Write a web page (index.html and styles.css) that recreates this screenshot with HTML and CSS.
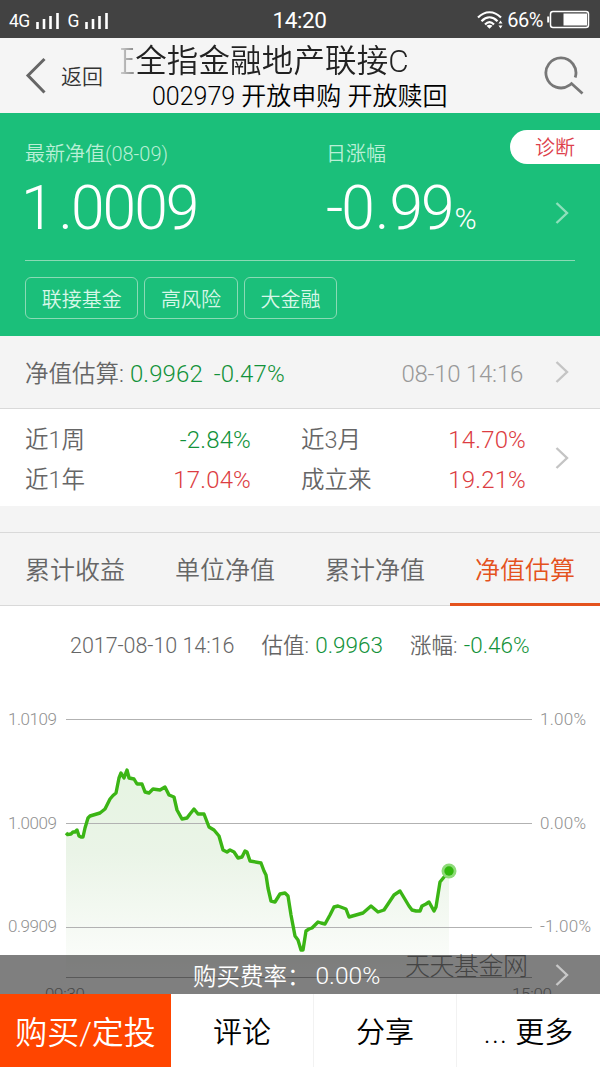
FILE: index.html
```html
<!DOCTYPE html>
<html lang="zh-CN">
<head>
<meta charset="utf-8">
<title>基金详情</title>
<link rel="stylesheet" href="styles.css">
</head>
<body>
<div class="app">
  <div class="status">
    <div class="signals">
      <span>4G</span>
      <svg width="24" height="18" viewBox="0 0 24 18"><path d="M1.500 10v7M8 7v10M14.500 4v13M21.500 1v16" stroke="#fff" stroke-width="2.600"/></svg>
      <span class="g">G</span>
      <svg width="24" height="18" viewBox="0 0 24 18"><path d="M1.500 10v7M8 7v10M14.500 4v13M21.500 1v16" stroke="#fff" stroke-width="2.600"/></svg>
    </div>
    <div class="clock">14:20</div>
    <div class="power">
      <svg width="26" height="18" viewBox="0 0 26 18" fill="none" stroke="#fff" stroke-width="2.200"><path d="M1 6.500C8-.5 17-.5 24 6.500M4.500 10.200c5-5 11-5 16 0M8 13.500c3-3 6-3 9 0"/><path d="M9.500 14.800q3-2 6 0l-3 3z" fill="#fff" stroke="none"/><path d="M23.500 9.500l2 3h-4zM23.500 17.500l2-3h-4z" fill="#fff" stroke="none"/></svg>
      <span class="pct">66%</span>
      <svg class="battery" width="43" height="19" viewBox="0 0 43 19"><rect x="3.500" y="1.500" width="38" height="16" rx="2.500" fill="none" stroke="#fff" stroke-width="1.500"/><path d="M1.200 6.500v6" stroke="#fff" stroke-width="2"/><path d="M16.500 3.500h23.500v12h-23.500z" fill="#fff"/></svg>
    </div>
  </div>

  <header class="nav">
    <div class="back">
      <svg width="22" height="38" viewBox="0 0 22 38"><path d="M19.500 2L3 18.500l16.500 17" fill="none" stroke="#666" stroke-width="3"/></svg>
      <span>返回</span>
    </div>
    <div class="heading">
      <div class="marquee"><span>证全指金融地产联接C</span></div>
      <div class="subtitle">002979 开放申购 开放赎回</div>
    </div>
    <svg class="search" width="40" height="40" viewBox="0 0 40 40" fill="none" stroke="#777" stroke-width="2.800"><path d="M31.200 21.500A15 15 0 1 0 25.500 29.200L27.500 27.500L38.500 37.500"/></svg>
  </header>

  <section class="hero">
    <div class="diagnose">诊断</div>
    <div class="figures">
      <div class="figure"><div class="label">最新净值(08-09)</div><div class="big nav-value">1<i>.</i>0009</div></div>
      <div class="figure"><div class="label">日涨幅</div><div class="big">-0<i>.</i>99<small>%</small></div></div>
      <svg class="chev" width="14" height="22" viewBox="0 0 14 22"><path d="M1.500 1l10.500 10L1.500 21"/></svg>
    </div>
    <div class="tags"><span>联接基金</span><span>高风险</span><span>大金融</span></div>
  </section>

  <section class="estimate">
    <span class="est-label">净值估算:</span><span class="est-num green">0.9962</span><span class="est-num green">-0.47%</span>
    <span class="est-time">08-10 14:16</span>
    <svg class="chev" width="14" height="22" viewBox="0 0 14 22"><path d="M1.500 1l10.500 10L1.500 21"/></svg>
  </section>

  <section class="returns">
    <div class="grid">
      <span>近1周</span><span class="val green">-2.84%</span><span>近3月</span><span class="val red">14.70%</span>
      <span>近1年</span><span class="val red">17.04%</span><span>成立来</span><span class="val red">19.21%</span>
    </div>
    <svg class="chev" width="14" height="22" viewBox="0 0 14 22"><path d="M1.500 1l10.500 10L1.500 21"/></svg>
  </section>

  <nav class="tabs"><span>累计收益</span><span>单位净值</span><span>累计净值</span><span class="active">净值估算</span></nav>

  <div class="legend"><span class="date">2017-08-10 14:16</span><span>估值: <b class="green">0.9963</b></span><span>涨幅: <b class="green">-0.46%</b></span></div>

  <svg class="chart" width="600" height="337" viewBox="0 680 600 337">
    <defs><linearGradient id="fade" x1="0" y1="770" x2="0" y2="977" gradientUnits="userSpaceOnUse"><stop offset="0" stop-color="#e6f4e2"/><stop offset=".4" stop-color="#eaf4e7"/><stop offset=".9" stop-color="#fafcf9"/><stop offset="1" stop-color="#fff"/></linearGradient></defs>
    <path fill="url(#fade)" d="M66 833L75 832L83 837L88 818L100 813L110 799L116 793L121 773L127 770L134 779L142 784L149 793L165 787L174 797L182 819L194 809L204 814L209 827L219 836L223 850L238 858L245 851L250 861L261 863L266 875L271 901L285 893L291 915L295 936L302 951L306 931L318 922L325 924L334 907L346 909L349 917L371 906L378 912L390 901L400 891L409 906L416 911L429 902L434 911L440 882L449 871V977H66Z"/>
    <path d="M66 719.500H532M66 823.500H532M66 927.500H532M66 977.500H532" stroke="#b2b2b2"/>
    <path class="line" d="M66 833L67.500 834.500L71 834L73 832L75 832L77 830L79 836L81 837L83 837L85 828L88 818L90 816L95 814.500L100 813L105 809L110 799L113 795.500L116 793L119 778L121 773L124 778L127 770L129 778L134 779L137 784L142 784L145 792L149 793L153 789L160 790L165 787L169 795L174 797L177 810L182 819L187 818L190 814L194 809L198 814L204 814L209 827L214 830L219 836L223 850L227 852L230 850L234 852L238 858L242 857L245 851L247 852L250 861L261 863L264 871L266 875L268 888L271 901L275 902L280 894L285 893L288 896L291 915L295 936L298 940L301 950L303 950L306 931L309 929L312 928L318 922L321 923L325 924L330 915L334 907L338 906L346 909L349 917L356 915L363 913L371 906L378 912L384 910L390 901L394 895L400 891L409 906L412 910L416 911L420 911L422 906L426 904L429 902L434 911L436 907L440 882L449 871"/>
    <circle cx="449" cy="871" r="7.500" fill="#8edb79"/><circle cx="449" cy="871" r="4.700" fill="#31b80d"/>
    <g class="axis">
      <text x="8" y="725" textLength="49">1.0109</text><text x="8" y="829" textLength="49">1.0009</text><text x="8" y="932" textLength="49">0.9909</text>
      <text x="540" y="725" textLength="46">1.00%</text><text x="540" y="829" textLength="46">0.00%</text><text x="540" y="932" textLength="51">-1.00%</text>
      <text x="45" y="1000" textLength="40">09:30</text><text x="512" y="1000" textLength="40">15:00</text>
    </g>
    <text class="brand" x="405" y="975" textLength="123">天天基金网</text>
  </svg>

  <footer class="dock">
    <div class="fee"><span>购买费率：</span><span class="rate">0.00%</span><svg class="chev" width="14" height="22" viewBox="0 0 14 22"><path d="M1.500 1l10.500 10L1.500 21"/></svg></div>
    <div class="actions"><span class="buy">购买/定投</span><span>评论</span><span>分享</span><span class="more"><i>...</i> 更多</span></div>
  </footer>
</div>
</body>
</html>
```
FILE: styles.css
```css
* { box-sizing: border-box; }
body { margin: 0; font-family: Roboto, "Noto Sans CJK SC", sans-serif; font-weight: 350; color: #666; }
i { font-style: normal; }
.app { position: relative; width: 600px; height: 1067px; overflow: hidden; background: #fff; white-space: nowrap; }
.green { color: #12923a; }
.red { color: #dc3d42; }
.chev { flex: none; fill: none; stroke: #c4c4c4; stroke-width: 2.4; }

.status { display: grid; grid-template-columns: 1fr auto 1fr; align-items: center; height: 38px; padding: 1px 10px 0 9px; background: #424242; color: #fff; font-weight: 400; }
.signals { display: flex; align-items: center; gap: 6px; font-size: 17.500px; letter-spacing: -.6px; padding-top: 2px; }
.signals .g { margin-left: 2px; }
.clock { font-size: 22.500px; letter-spacing: -.4px; }
.power { display: flex; align-items: center; justify-content: flex-end; gap: 4px; font-size: 20px; }
.pct { letter-spacing: -.5px; }

.nav { display: flex; height: 75px; background: #f5f5f5; }
.back { display: flex; align-items: center; gap: 14px; width: 121px; padding-left: 25px; font-size: 21px; color: #333; }
.back span { margin-top: -1px; }
.heading { width: 400px; color: #222; }
.marquee { overflow: hidden; height: 42px; line-height: 47px; font-size: 31.500px; -webkit-mask-image: linear-gradient(90deg, rgba(0,0,0,.2), rgba(0,0,0,.5) 13px, #000 14px); mask-image: linear-gradient(90deg, rgba(0,0,0,.2), rgba(0,0,0,.5) 13px, #000 14px); }
.marquee span { margin-left: -17.500px; letter-spacing: .15px; }
.subtitle { margin-left: 31px; font-size: 25px; line-height: 33px; color: #000; }
.search { margin: 18px 0 0 23px; }

.hero { position: relative; height: 223px; padding: 0 25px; background: #1bbf7a; color: #fff; }
.diagnose { position: absolute; right: 0; top: 17px; width: 90px; height: 34px; padding-left: 25px; border-radius: 17px 0 0 17px; background: #fff; color: #dd3f4c; font-size: 20px; line-height: 37px; }
.figures { display: flex; height: 148px; padding-top: 26px; border-bottom: 1px solid #8adab5; }
.figure { width: 301px; }
.label { font-size: 20px; line-height: 31px; color: #b9efd6; }
.big { height: 80px; font-size: 60.500px; font-weight: 300; line-height: 77px; letter-spacing: -2px; }
.big i { padding: 0 2px; }
.big small { font-size: 30px; padding-left: 2px; }
.nav-value { margin-left: -4px; }
.nav-value i { padding: 0 0 0 6px; }
.figures .chev { margin: 63px 0 0 -72px; stroke: #8fe0bc; }
.tags { display: flex; gap: 6px; padding-top: 16px; font-size: 20px; color: #d7f7e8; }
.tags span { height: 42px; padding: 0 15.700px; border: 1px solid #8adab5; border-radius: 6px; line-height: 44px; }

.estimate { display: flex; align-items: center; height: 73px; padding: 0 31px 0 25px; background: #f4f4f4; border-bottom: 1px solid #d9d9d9; font-size: 24px; }
.estimate span { padding-top: 3px; }
.est-label { margin-right: 6px; font-size: 23.500px; line-height: 28px; }
.est-num { margin-right: 11px; letter-spacing: .1px; }
.est-time { margin-left: auto; margin-right: 32px; color: #999; letter-spacing: -.25px; }

.returns { display: flex; align-items: center; justify-content: space-between; height: 97px; padding: 4px 31px 0 25px; font-size: 23.500px; }
.returns .chev { margin-top: -3px; }
.grid { display: grid; grid-template-columns: 110px 116px 151px 124px; line-height: 40px; }
.grid span:nth-child(4n+3) { margin-left: 50px; }
.val { text-align: right; font-size: 24px; letter-spacing: .15px; }

.tabs { display: grid; grid-template-columns: repeat(4, 150px); height: 100px; padding-top: 26px; background: linear-gradient(#f4f4f4 26px, #d9d9d9 26px, #d9d9d9 27px, #f4f4f4 27px); border-bottom: 1px solid #d9d9d9; font-size: 25px; line-height: 77px; text-align: center; }
.tabs .active { height: 74px; border-bottom: 3px solid #e4521d; color: #e4521d; }

.legend { display: flex; gap: 27px; height: 74px; padding-left: 70px; font-size: 21.500px; line-height: 79px; }
.legend b { margin-left: 1px; font-weight: inherit; font-size: 22.500px; }
.date { letter-spacing: -.05px; }
.chart { display: block; }
.line { fill: none; stroke: #3bb515; stroke-width: 3.4; stroke-linejoin: round; }
.axis { font-size: 17px; font-weight: 300; fill: #909090; }
.brand { font-size: 25px; font-weight: 300; fill: #888; }

.dock { position: absolute; left: 0; right: 0; bottom: 0; }
.fee { display: flex; align-items: center; height: 39px; padding: 0 31px 0 193px; background: rgba(0,0,0,.5); color: #fff; font-size: 23.500px; }
.fee span { padding-top: 1px; }
.rate { margin-left: 5px; font-size: 24.500px; }
.fee .chev { margin-left: auto; stroke: #c8c8c8; }
.actions { display: grid; grid-template-columns: 171px 143px 143px 143px; height: 73px; background: #fff; color: #000; font-size: 29px; line-height: 78px; text-align: center; }
.actions span { border-right: 1px solid #f2f2f2; }
.actions .buy { border: 0; background: #ff4500; color: #fff; font-size: 32px; }
.actions .more { border: 0; }
.more i { letter-spacing: 1.200px; }
```
